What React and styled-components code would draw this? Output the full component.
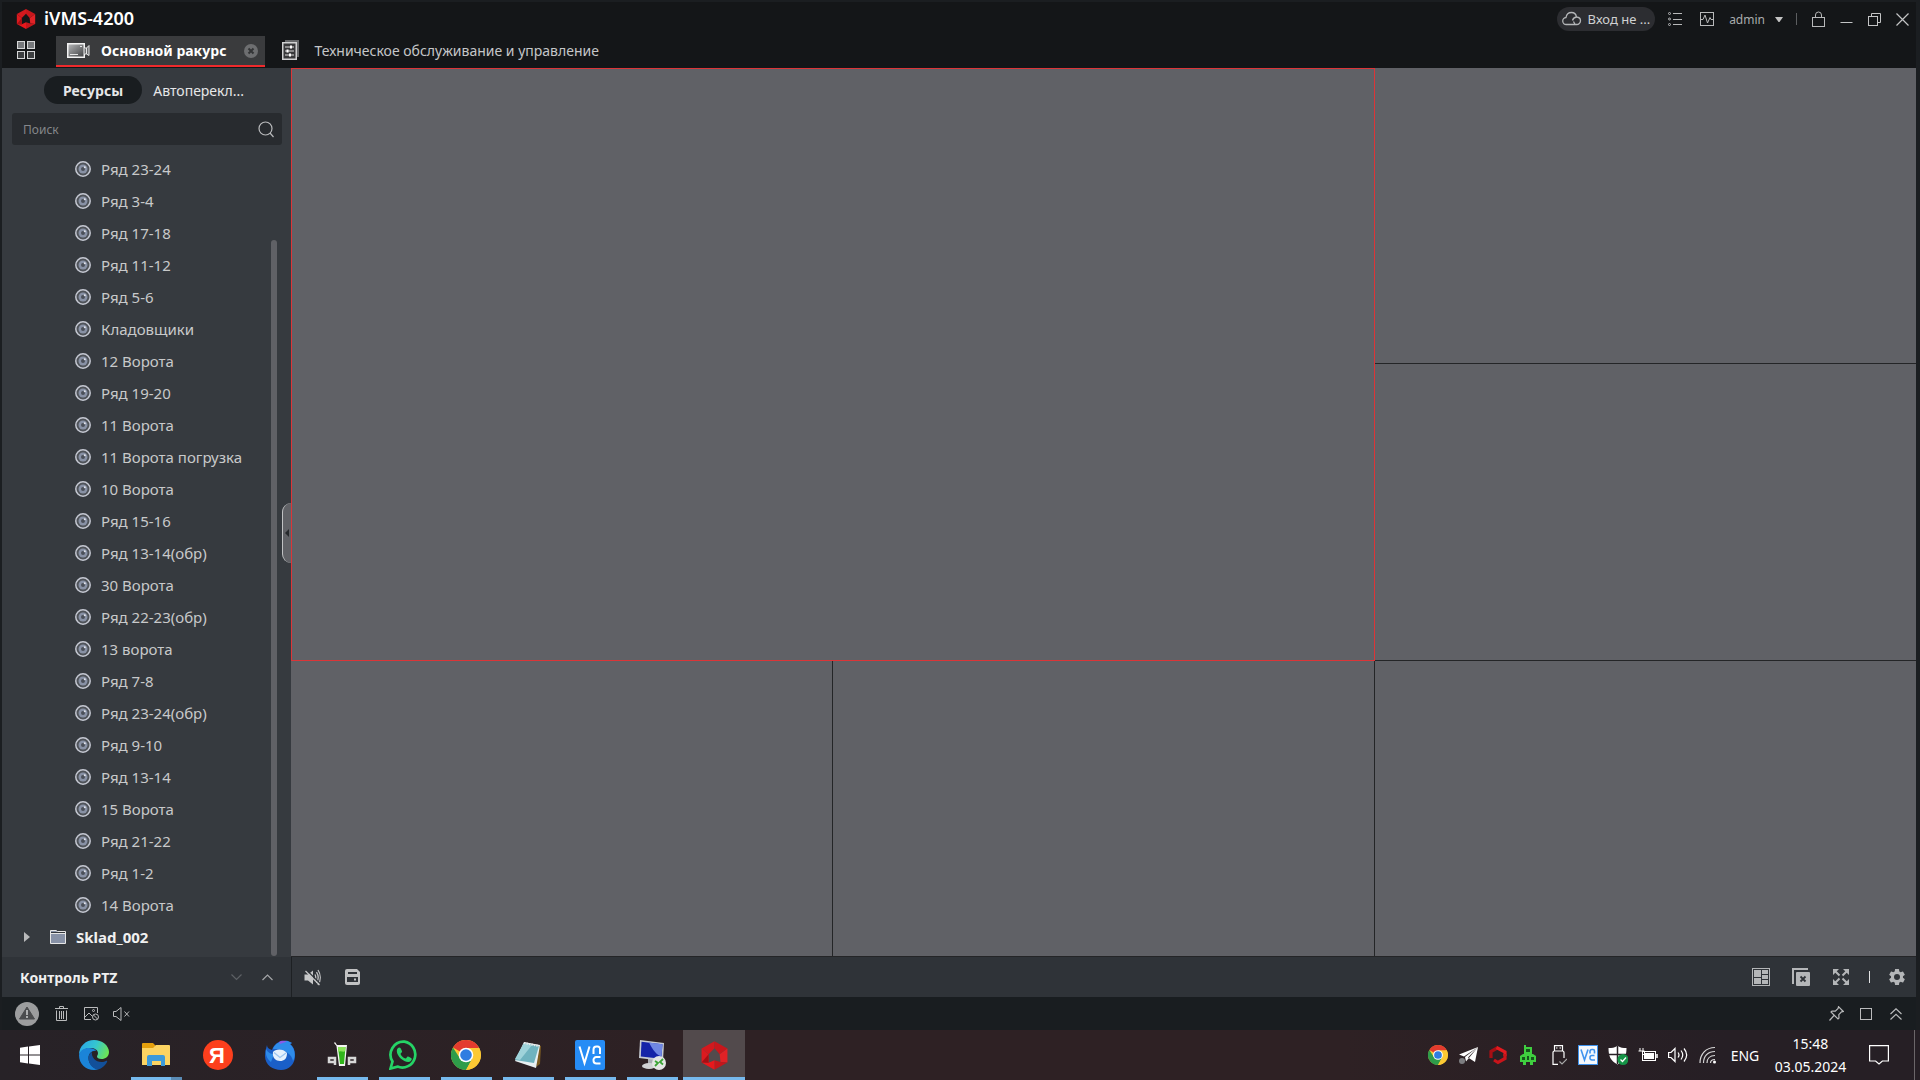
import styled, { createGlobalStyle } from 'styled-components';

const cameras = [
  'Ряд 23-24',
  'Ряд 3-4',
  'Ряд 17-18',
  'Ряд 11-12',
  'Ряд 5-6',
  'Кладовщики',
  '12 Ворота',
  'Ряд 19-20',
  '11 Ворота',
  '11 Ворота погрузка',
  '10 Ворота',
  'Ряд 15-16',
  'Ряд 13-14(обр)',
  '30 Ворота',
  'Ряд 22-23(обр)',
  '13 ворота',
  'Ряд 7-8',
  'Ряд 23-24(обр)',
  'Ряд 9-10',
  'Ряд 13-14',
  '15 Ворота',
  'Ряд 21-22',
  'Ряд 1-2',
  '14 Ворота',
];

/* ---------- app icons ---------- */

const HexLogo = ({ size = 22 }) => (
  <svg width={size} height={size} viewBox="0 0 24 24" aria-hidden="true">
    <path d="M12 1v5.300L7.400 11 2 6.500z" fill="#d3191e" />
    <path d="M12 1l10 5.500-6 4.500-4-4.700z" fill="#c8171c" />
    <path d="M22 6.500v11l-5.400-.5-.6-6z" fill="#e02226" />
    <path d="M22 17.500L12 23v-7.400l4.600 1.400z" fill="#c4161b" />
    <path d="M12 23L2 17.500l5.400.2 4.600-2.100z" fill="#e8181d" />
    <path d="M2 17.500v-11L7.400 11v6.700z" fill="#dc1a1f" />
    <path d="M2 17.500l5.400-6.500v6.700z" fill="#a50f14" />
  </svg>
);

const GridIcon = () => (
  <svg width="18" height="18" viewBox="0 0 18 18" aria-hidden="true">
    <g fill="#77797c" stroke="#d6d7d8">
      <rect x=".5" y=".5" width="7" height="7" />
      <rect x="10.500" y=".5" width="7" height="7" />
      <rect x=".5" y="10.500" width="7" height="7" fill="#3d3f41" />
      <rect x="10.500" y="10.500" width="7" height="7" fill="#3d3f41" />
    </g>
  </svg>
);

const CameraIcon = () => (
  <svg width="23" height="15" viewBox="0 0 23 15" aria-hidden="true">
    <defs>
      <linearGradient id="cam" x1="0" y1="0" x2="1" y2="1">
        <stop offset="0" stopColor="#b9babc" />
        <stop offset="1" stopColor="#3c3d3f" />
      </linearGradient>
    </defs>
    <rect x=".75" y=".75" width="16.500" height="13.500" fill="url(#cam)" stroke="#f2f2f2" strokeWidth="1.500" />
    <path d="M13 3.500h2M3 11.500h8" stroke="#e8e8e8" />
    <path d="M17.500 5h2v6h-2M19.500 5l2.500-2.500v10L19.500 11" fill="#6b6c6e" stroke="#e8e8e8" />
  </svg>
);

const SlidersIcon = () => (
  <svg width="17" height="20" viewBox="0 0 17 20" aria-hidden="true">
    <path d="M3 0h14v17h-2V2H3z" fill="#66686a" />
    <rect x=".75" y="2.750" width="13.500" height="16.500" fill="#38393b" stroke="#d0d1d2" strokeWidth="1.500" />
    <path d="M3 7h9M3 11h9M3 15h9" stroke="#dcdcdc" />
    <path d="M9 5.500v3M5.500 9.500v3M8 13.500v3" stroke="#fff" strokeWidth="2" />
  </svg>
);

const TabCloseIcon = () => (
  <svg width="14" height="14" viewBox="0 0 14 14" aria-hidden="true">
    <circle cx="7" cy="7" r="7" fill="#6d6e70" />
    <path d="M4.500 4.500l5 5M9.500 4.500l-5 5" stroke="#333436" strokeWidth="2" />
  </svg>
);

const CloudIcon = () => (
  <svg width="20" height="16" viewBox="0 0 20 16" fill="none" stroke="#b4b6b8" strokeWidth="1.300" aria-hidden="true">
    <path d="M4.500 13.500a3.500 3.500 0 01-.5-7C4.500 3 7 1.500 9.500 1.500s4.500 1.500 5 4.500c2.500.2 4 1.800 4 3.700a3.800 3.800 0 01-4 3.800z" />
    <path d="M14.500 6c-2 .2-3.500 1.200-4 3.500" />
    <path d="M13 13.500c-1-2-1.500-3-1.500-3" />
  </svg>
);

const ListIcon = () => (
  <svg width="14" height="14" viewBox="0 0 14 14" fill="none" stroke="#b8b9ba" aria-hidden="true">
    <path d="M5 1.500h9M5 7.500h9M5 12.500h9" />
    <circle cx="1.500" cy="1.500" r="1" />
    <circle cx="1.500" cy="7" r="1" />
    <circle cx="1.500" cy="12.500" r="1" />
  </svg>
);

const WaveIcon = () => (
  <svg width="14" height="14" viewBox="0 0 14 14" fill="none" stroke="#b8b9ba" aria-hidden="true">
    <rect x=".5" y=".5" width="13" height="13" />
    <path d="M1 7.500h2L5 3l2.500 8L10 5.500l1 2h2" />
  </svg>
);

const CaretIcon = () => (
  <svg width="8" height="5" viewBox="0 0 8 5" aria-hidden="true">
    <path d="M0 0h8L4.500 5h-1z" fill="#c3c3c3" />
  </svg>
);

const LockIcon = () => (
  <svg width="13" height="16" viewBox="0 0 13 16" fill="none" stroke="#b8b9ba" aria-hidden="true">
    <rect x=".5" y="6.500" width="12" height="9" />
    <path d="M3.500 6.500V4a3 3 0 016 0v2.500" />
  </svg>
);

const MinimizeIcon = () => (
  <svg width="13" height="13" viewBox="0 0 13 13" stroke="#c3c4c5" aria-hidden="true">
    <path d="M.5 9.500h12" />
  </svg>
);

const RestoreIcon = () => (
  <svg width="13" height="13" viewBox="0 0 13 13" fill="none" stroke="#c3c4c5" aria-hidden="true">
    <path d="M3.500 3.500v-3h9v9h-3" />
    <rect x=".5" y="3.500" width="9" height="9" />
  </svg>
);

const CloseIcon = () => (
  <svg width="13" height="13" viewBox="0 0 13 13" stroke="#c3c4c5" strokeWidth="1.200" aria-hidden="true">
    <path d="M.5.5l12 12M12.500.5l-12 12" />
  </svg>
);

const SearchIcon = () => (
  <svg width="16" height="17" viewBox="0 0 16 17" fill="none" stroke="#b9babc" strokeWidth="1.200" aria-hidden="true">
    <circle cx="7.500" cy="7.500" r="6.500" />
    <path d="M12 12l3.500 4" />
  </svg>
);

const LensIcon = () => (
  <svg width="16" height="16" viewBox="0 0 16 16" aria-hidden="true">
    <circle cx="8" cy="8" r="7.200" fill="#4f5359" stroke="#c5c8d2" strokeWidth="1.500" />
    <circle cx="8" cy="8" r="4.500" fill="#8891a5" />
    <circle cx="8" cy="8" r="2" fill="#4b5059" />
    <circle cx="9.800" cy="6.200" r="1" fill="#e4e6ec" />
  </svg>
);

const ExpandIcon = () => (
  <svg width="6" height="10" viewBox="0 0 6 10" aria-hidden="true">
    <path d="M0 0l6 5-6 5z" fill="#b9babb" />
  </svg>
);

const FolderIcon = () => (
  <svg width="16" height="14" viewBox="0 0 16 14" aria-hidden="true">
    <path d="M.5.500H6l1.500 1h8v12H.5z" fill="#8791a6" stroke="#e6e6e6" />
    <path d="M1 2.500h14" stroke="#33373c" />
    <path d="M1 3.500h14" stroke="#e6e6e6" />
  </svg>
);

const ChevronIcon = ({ down, color }) => (
  <svg width="11" height="7" viewBox="0 0 11 7" fill="none" stroke={color} strokeWidth="1.200" aria-hidden="true">
    <path d={down ? 'M.5.500l5 5 5-5' : 'M.5 6l5-5 5 5'} />
  </svg>
);

const SpeakerOffIcon = () => (
  <svg width="17" height="17" viewBox="0 0 17 17" fill="none" stroke="#c6c7c8" strokeWidth="1.300" aria-hidden="true">
    <path d="M.5 5.500h3.500L9 1.500v14L4 11.500H.5z" fill="#c6c7c8" stroke="none" />
    <path d="M11 5.500c1 2 1 4 0 6M12.500 3.200c2.200 3.400 2.200 7.200 0 10.600M14 1c3 4.500 3 10.500 0 15" />
    <path d="M3 1.500l13 13" stroke="#2f3338" strokeWidth="1.300" />
    <path d="M1.500 2l14 14" />
  </svg>
);

const SaveIcon = () => (
  <svg width="15" height="16" viewBox="0 0 15 16" aria-hidden="true">
    <path d="M0 2a2 2 0 012-2h10l3 3v11a2 2 0 01-2 2H2a2 2 0 01-2-2z" fill="#c1c2c3" />
    <path d="M3 3h9v2H3zM2 8h11v5H2z" fill="#2f3338" />
    <path d="M9 9.500h2v2H9z" fill="#c1c2c3" />
  </svg>
);

const LayoutIcon = () => (
  <svg width="18" height="18" viewBox="0 0 18 18" aria-hidden="true">
    <rect x=".5" y=".5" width="17" height="17" fill="none" stroke="#b4b6b8" />
    <path d="M2 2h7v7H2zM2 10h7v6H2zM10 2h6v4h-6zM10 7h6v4h-6zM10 12h6v4h-6z" fill="#b4b6b8" />
  </svg>
);

const CloseAllIcon = () => (
  <svg width="18" height="18" viewBox="0 0 18 18" aria-hidden="true">
    <path d="M1 16V1h15" fill="none" stroke="#b4b6b8" strokeWidth="2" />
    <rect x="4" y="4" width="14" height="14" rx="1" fill="#b4b6b8" />
    <path d="M8.500 8.500l5 5M13.500 8.500l-5 5" stroke="#2f3338" strokeWidth="1.800" />
  </svg>
);

const FullscreenIcon = () => (
  <svg width="16" height="16" viewBox="0 0 16 16" aria-hidden="true">
    <path d="M0 0h6L0 6zM16 0v6l-6-6zM0 16v-6l6 6zM16 16h-6l6-6z" fill="#b4b6b8" />
    <path d="M2 2l4.500 4.500M14 2L9.500 6.500M2 14l4.500-4.500M14 14L9.500 9.500" stroke="#b4b6b8" strokeWidth="2" />
  </svg>
);

const GearIcon = () => (
  <svg width="20" height="20" viewBox="0 0 24 24" aria-hidden="true">
    <path
      fill="#b4b6b8"
      d="M19.140 12.940c.04-.3.06-.61.06-.94 0-.32-.02-.64-.07-.94l2.030-1.580a.49.49 0 00.12-.61l-1.920-3.320a.488.488 0 00-.59-.22l-2.390.96c-.5-.38-1.030-.7-1.620-.94l-.36-2.540a.484.484 0 00-.48-.41h-3.840c-.24 0-.43.17-.47.41l-.36 2.540c-.59.24-1.130.57-1.620.94l-2.390-.96c-.22-.08-.47 0-.59.22L2.740 8.870c-.12.21-.08.47.12.61l2.030 1.580c-.05.3-.09.63-.09.94s.02.64.07.94l-2.030 1.580a.49.49 0 00-.12.61l1.920 3.320c.12.22.37.29.59.22l2.390-.96c.5.38 1.030.7 1.620.94l.36 2.540c.05.24.24.41.48.41h3.840c.24 0 .44-.17.47-.41l.36-2.540c.59-.24 1.130-.56 1.620-.94l2.390.96c.22.08.47 0 .59-.22l1.920-3.320c.12-.22.07-.47-.12-.61z"
    />
    <circle cx="12" cy="12" r="3.600" fill="#2f3338" />
  </svg>
);

const WarningIcon = () => (
  <svg width="24" height="24" viewBox="0 0 24 24" aria-hidden="true">
    <circle cx="12" cy="12" r="12" fill="#9c9d9e" />
    <path d="M12 5l7.500 12h-15z" fill="#4b4c4e" stroke="#4b4c4e" strokeLinejoin="round" />
    <path d="M12 8v5M12 14v2" stroke="#b9babb" strokeWidth="1.800" />
  </svg>
);

const TrashIcon = () => (
  <svg width="13" height="15" viewBox="0 0 13 15" fill="none" stroke="#babbbc" aria-hidden="true">
    <path d="M0 2.500h13M4.500 2.500v-2h4v2M1.500 4.500v10h10v-10M4.500 5v8M6.500 5v8M8.500 5v8" />
  </svg>
);

const PictureOffIcon = () => (
  <svg width="15" height="14" viewBox="0 0 15 14" fill="none" stroke="#babbbc" aria-hidden="true">
    <path d="M7 12.500H.5V.5h13V6M1 10l4-4 3 3" />
    <circle cx="9.500" cy="3.500" r="1" />
    <circle cx="11.500" cy="10" r="3" />
    <path d="M9.500 8l4 4" />
  </svg>
);

const MuteIcon = () => (
  <svg width="17" height="14" viewBox="0 0 17 14" fill="none" stroke="#babbbc" aria-hidden="true">
    <path d="M.5 4.500H3l5-4v13l-5-4H.5zM11.500 4.500l4.500 5M16 4.500l-4.500 5" />
  </svg>
);

const PinIcon = () => (
  <svg width="15" height="15" viewBox="0 0 15 15" fill="none" stroke="#babbbc" strokeWidth="1.200" aria-hidden="true">
    <path d="M9.500.7l4.800 4.800-1.800.4-2.700 2.800.2 3.300-1 1L2 6l1-1 3.300.2L9.100 2.500zM5 9.500L.5 14.500" />
  </svg>
);

const SquareIcon = () => (
  <svg width="12" height="12" viewBox="0 0 12 12" fill="none" stroke="#babbbc" aria-hidden="true">
    <rect x=".5" y=".5" width="11" height="11" />
  </svg>
);

const DoubleUpIcon = () => (
  <svg width="12" height="12" viewBox="0 0 12 12" fill="none" stroke="#babbbc" strokeWidth="1.200" aria-hidden="true">
    <path d="M.5 6L6 .8 11.500 6M.5 11.500L6 6.300l5.500 5.200" />
  </svg>
);

/* ---------- taskbar icons ---------- */

const WindowsIcon = () => (
  <svg width="20" height="20" viewBox="0 0 20 20" fill="#fff" aria-hidden="true">
    <path d="M0 2.800l8-1.200v8H0zM9 1.500L20 0v9.600H9zM0 10.500h8v8l-8-1.200zM9 10.500h11V20L9 18.500z" />
  </svg>
);

const EdgeIcon = () => (
  <svg width="30" height="30" viewBox="0 0 30 30" aria-hidden="true">
    <defs>
      <linearGradient id="edgeTop" x1="0" y1="0.300" x2="1" y2="0.600">
        <stop offset="0" stopColor="#2aa6e8" />
        <stop offset=".5" stopColor="#35c6d0" />
        <stop offset="1" stopColor="#6ee552" />
      </linearGradient>
    </defs>
    <path d="M0 15C0 6 7 0 15 0s15 5.500 15 12c0 4.500-3.500 7-7.500 7-3 0-4.500-1-4.500-2.500 0-1 1-1.500 1-3.500 0-3-3.500-5-7.500-5C6 8 1.500 11 0 15z" fill="url(#edgeTop)" />
    <path d="M0 15c1-4.500 5-7 10-7 3 0 6 1 7.500 3-4-1-8 2-8 7 0 6 5 10.500 10 11-1.500.7-3 1-4.500 1C7 30 0 24 0 15z" fill="#1b84d8" />
    <path d="M9.500 18c0-3 1.500-5 3.500-6-1 5 3.500 10 9.500 10 2 0 3.500-.5 4.500-1 1-.4 1.500.2 1 1C26 26 22 29 18.500 29.500 13 28.500 9.500 23.500 9.500 18z" fill="#12509a" />
  </svg>
);

const ExplorerIcon = () => (
  <svg width="28" height="24" viewBox="0 0 28 24" aria-hidden="true">
    <path d="M0 1a1 1 0 011-1h10l3 3H28v19H0z" fill="#e5a00d" />
    <path d="M0 5h11l3-3h13a1 1 0 011 1v19H0z" fill="#fcd462" />
    <path d="M5 23v-9a2 2 0 012-2h14a2 2 0 012 2v9h-4v-5h-9v5z" fill="#3d9ad9" />
  </svg>
);

const YandexIcon = () => (
  <svg width="30" height="30" viewBox="0 0 30 30" aria-hidden="true">
    <circle cx="15" cy="15" r="15" fill="#fc3f1d" />
    <text x="14" y="23" textAnchor="middle" fontFamily="Liberation Sans, sans-serif" fontSize="22" fontWeight="bold" fill="#fff">
      Я
    </text>
  </svg>
);

const ThunderbirdIcon = () => (
  <svg width="30" height="30" viewBox="0 0 30 30" aria-hidden="true">
    <path d="M2 5c0 3 2 4 5 5 2-6 8-10 14-9l6 2-2 1c4 3 5 7 5 12 0 8-6 14-14 14S0 25 0 16C0 12 1 9 2 5z" fill="#1a5fc8" />
    <path d="M8 9c2-6 9-9 15-8l4 2-2 1c5 4 6 12 3 17-1-7-9-13-20-12z" fill="#2f8cea" />
    <path d="M14 2c2-1.500 5-1.500 8-.5L15 4z" fill="#8a5be8" />
    <path d="M1 9c2 4 5 5 8 5l-3 8C2 19 0 14 1 9z" fill="#2e8be8" />
    <path d="M8 12c2-3 10-4 14 1 0 6-3 8-7 8s-8-3-7-9z" fill="#e6f1fd" />
    <path d="M9 12.500l6 5 6-4.500" fill="none" stroke="#9ec6f0" strokeWidth="1.300" />
  </svg>
);

const GlassIcon = () => (
  <svg width="30" height="28" viewBox="0 0 30 28" aria-hidden="true">
    <path d="M8 1l2 3h10l-2 21h-6L9.500 5 7 2z" fill="#f4f5f2" />
    <path d="M11 6h7.500L17 23h-4z" fill="#31b51b" />
    <path d="M11 6h7.500l-.3 4c-2 2-4-1-6.800 1z" fill="#8be35a" />
    <path d="M8 24v-7H2v4h6M22 24v-7h6v4h-6" fill="none" stroke="#d7d7d7" strokeWidth="2.500" />
  </svg>
);

const WhatsAppIcon = () => (
  <svg width="30" height="30" viewBox="0 0 30 30" aria-hidden="true">
    <path d="M1.500 28.500l2-7A13 13 0 0115.500 1.700a13 13 0 11-7 24.900z" fill="none" stroke="#25d366" strokeWidth="2.700" />
    <path d="M10.500 7.500c-1.500 0-2.700 1.500-2.700 3.500 0 5 6.500 11 11.500 11 2 0 3.500-1.500 3.500-3.200 0-.6-3.400-2.300-4-2.300-.8 0-1.300 2-2.200 2-1.500 0-5-3.200-5-4.500 0-.8 1.500-1.500 1.500-2.200 0-.6-1.300-4.300-2.600-4.300z" fill="#25d366" />
  </svg>
);

const ChromeIcon = ({ size = 30 }) => (
  <svg width={size} height={size} viewBox="0 0 30 30" aria-hidden="true">
    <circle cx="15" cy="15" r="15" fill="#fcc934" />
    <path d="M15 15L2 7.500a15 15 0 0126 0z" fill="#e33b2e" />
    <path d="M2 7.500A15 15 0 0015 30l6.500-11.500L9 18.500z" fill="#2e9c4a" />
    <path d="M15 8h13.200A15 15 0 0115 30l6.300-11.400z" fill="#fcc934" />
    <circle cx="15" cy="15" r="7.300" fill="#fff" />
    <circle cx="15" cy="15" r="5.800" fill="#2f7de1" />
  </svg>
);

const NotepadIcon = () => (
  <svg width="28" height="28" viewBox="0 0 28 28" aria-hidden="true">
    <path d="M24 4l3 1-1 18-4 3z" fill="#7a5a22" />
    <path d="M10 1l16 3-4 23L1 20z" fill="#e9f0f2" />
    <path d="M10 2l15 3-5 17L1 19z" fill="#6fb3bf" />
    <path d="M10 2l8 2-12 15-5-1z" fill="#9fd3da" />
    <path d="M10 2l15 3" stroke="#e8e8e8" strokeWidth="2" strokeDasharray="1.500 1" />
  </svg>
);

const VncIcon = () => (
  <svg width="30" height="30" viewBox="0 0 30 30" fill="none" stroke="#fff" strokeWidth="2" aria-hidden="true">
    <rect width="30" height="30" rx="2" fill="#268cf5" stroke="none" />
    <path d="M4.500 6.500L9.500 23l5-16.500" />
    <path d="M18.500 14V9.500a3 3 0 013-3h1a2.500 2.500 0 012.500 3V14M25.500 17h-4a3 3 0 00-3 3.500 3 3 0 003 3h4" />
  </svg>
);

const RemoteIcon = () => (
  <svg width="30" height="30" viewBox="0 0 30 30" aria-hidden="true">
    <path d="M11 18h5l1 7h-6z" fill="#a9adb2" />
    <ellipse cx="12" cy="26" rx="7" ry="3" fill="#d0d2d4" />
    <path d="M3 0l24 3-1 18L2 18z" fill="#c6cbd2" />
    <path d="M4.500 1.700l21 2.600-1.200 14.500L3.800 16.500z" fill="#1524a8" />
    <path d="M12 2.600l13.500 1.700-1 12c-5-1-8.500-6-12.500-13.700z" fill="#6f87e3" />
    <circle cx="22" cy="23" r="7" fill="#e4e6e4" />
    <path d="M18 21l3 2-3 3M26 19l-3 3 3 2.500" fill="none" stroke="#3ba435" strokeWidth="1.800" />
  </svg>
);

/* ---------- tray icons ---------- */

const TelegramIcon = () => (
  <svg width="20" height="20" viewBox="0 0 20 20" aria-hidden="true">
    <path d="M20 2L1 9.500l5 2zM20 2L7 12l1 4.500zM20 2l-3 15-7-4.500z" fill="#fff" />
    <circle cx="4" cy="16" r="3" fill="#7d7d80" />
  </svg>
);

const HexOutlineIcon = () => (
  <svg width="20" height="20" viewBox="0 0 20 20" fill="none" strokeWidth="3.200" aria-hidden="true">
    <path d="M3 13V6.500L10 2.500" stroke="#a80f14" />
    <path d="M8.500 2.500L17 7v4" stroke="#e31a1f" />
    <path d="M17 9v4.500L10 17.500 6 15" stroke="#c8141a" />
  </svg>
);

const RobotIcon = () => (
  <svg width="16" height="20" viewBox="0 0 16 20" aria-hidden="true">
    <path d="M4 2V0h2v2h6v7h1l3 2v6h-3v3h-3v-3H6v3H3v-3H0v-6l3-2h1z" fill="#3fce3f" />
    <path d="M6 4h4v3H6zM2 12h3v3H2zM11 12h3v3h-3zM7 11h2v4H7z" fill="#14561b" />
  </svg>
);

const UsbIcon = () => (
  <svg width="18" height="20" viewBox="0 0 18 20" fill="none" stroke="#fff" strokeWidth="1.200" aria-hidden="true">
    <path d="M5.500 6V.7h8V6M9 19.300H4V7.500a1.500 1.500 0 011.500-1.500h8A1.500 1.500 0 0115 7.500V13M7 3h1.500M10.500 3H12" />
    <path d="M10.500 16.500l2.500 2.500 5-5" stroke="#a8a8a8" />
  </svg>
);

const VncTrayIcon = () => (
  <svg width="20" height="20" viewBox="0 0 20 20" fill="none" stroke="#3f93ee" strokeWidth="1.600" aria-hidden="true">
    <rect width="20" height="20" fill="#f4f8fd" stroke="none" />
    <rect x=".5" y=".5" width="19" height="19" strokeWidth="1" />
    <path d="M3 4.500L6.500 15 10 4.500M12 8.500V6a2 2 0 012-1.500h1a1.500 1.500 0 011.500 1.500v2.500M16.500 10.500H14a2 2 0 00-2 2 2 2 0 002 2.500h3" />
  </svg>
);

const ShieldIcon = () => (
  <svg width="20" height="20" viewBox="0 0 20 20" aria-hidden="true">
    <path d="M9.500.7c3 2 5.500 2.300 9 2.300 0 8-2 13-9 16.500C2.500 16 .5 11 .5 3c3.500 0 6-.3 9-2.300z" fill="#fff" />
    <path d="M9.500 1v18M1 9.500h17.500" stroke="#272125" strokeWidth="1.500" />
    <circle cx="15" cy="14.500" r="5.500" fill="#159447" />
    <path d="M12.500 14.500l2 2 3.500-4" fill="none" stroke="#fff" strokeWidth="1.300" />
  </svg>
);

const BatteryIcon = () => (
  <svg width="20" height="14" viewBox="0 0 20 14" fill="none" stroke="#fff" aria-hidden="true">
    <path d="M2 0v3M5 0v3M.5 3h6v2.500L4.500 7.500V12" />
    <rect x="4.500" y="3.500" width="13" height="9" />
    <path d="M6 5h10v6H6z" fill="#fff" stroke="none" />
    <path d="M19 6v4" strokeWidth="1.500" />
  </svg>
);

const VolumeIcon = () => (
  <svg width="20" height="16" viewBox="0 0 20 16" fill="none" stroke="#fff" strokeWidth="1.200" aria-hidden="true">
    <path d="M.6 5.500H3l4-4v13l-4-4H.6zM10 5.500c1.200 1.500 1.200 3.500 0 5M13 3.500c2.300 3 2.300 6 0 9M16 1.500c3.300 4 3.300 9 0 13" />
  </svg>
);

const WifiIcon = () => (
  <svg width="18" height="18" viewBox="0 0 18 18" fill="none" stroke="#d8d8d8" strokeWidth="1.200" aria-hidden="true">
    <path d="M1 17C1 8 7 1.500 16 1.500M4.500 17C4.500 10 9 5.500 16 5.500M8 17c0-4.500 3-7.500 8-7.500M11.500 17c0-2 1.500-3.500 4.500-3.500" />
    <circle cx="15.500" cy="16" r="1.500" fill="#fff" stroke="none" />
  </svg>
);

const BubbleIcon = () => (
  <svg width="20" height="20" viewBox="0 0 20 20" fill="none" stroke="#fff" strokeWidth="1.200" aria-hidden="true">
    <path d="M.6.600h18.800v15.400h-6L10 19l-3.400-3h-6z" />
  </svg>
);

const tasks = [
  { name: 'Microsoft Edge', Icon: EdgeIcon },
  { name: 'Проводник', Icon: ExplorerIcon, state: 'stacked' },
  { name: 'Яндекс', Icon: YandexIcon },
  { name: 'Thunderbird', Icon: ThunderbirdIcon },
  { name: 'QIP', Icon: GlassIcon, state: 'open' },
  { name: 'WhatsApp', Icon: WhatsAppIcon, state: 'open' },
  { name: 'Google Chrome', Icon: ChromeIcon, state: 'open' },
  { name: 'Блокнот', Icon: NotepadIcon, state: 'open' },
  { name: 'VNC', Icon: VncIcon, state: 'open' },
  { name: 'Удалённый рабочий стол', Icon: RemoteIcon, state: 'open' },
  { name: 'iVMS-4200', Icon: () => <HexLogo size={31} />, state: 'active' },
];

const trayItems = [
  { name: 'Google Chrome', Icon: () => <ChromeIcon size={20} /> },
  { name: 'Telegram', Icon: TelegramIcon },
  { name: 'iVMS-4200', Icon: HexOutlineIcon },
  { name: 'QIP', Icon: RobotIcon },
  { name: 'USB', Icon: UsbIcon },
  { name: 'VNC', Icon: VncTrayIcon },
  { name: 'Безопасность', Icon: ShieldIcon },
  { name: 'Батарея', Icon: BatteryIcon },
  { name: 'Громкость', Icon: VolumeIcon },
  { name: 'Wi-Fi', Icon: WifiIcon },
];

/* ---------- sections ---------- */

const TitleBar = () => (
  <TitleRow>
    <Brand>
      <HexLogo />
      <h1>iVMS-4200</h1>
    </Brand>
    <TitleActions>
      <CloudButton>
        <CloudIcon />
        Вход не ...
      </CloudButton>
      <IconButton $width={32} aria-label="Список">
        <ListIcon />
      </IconButton>
      <IconButton $width={32} aria-label="Состояние">
        <WaveIcon />
      </IconButton>
      <UserButton>
        admin
        <CaretIcon />
      </UserButton>
      <Divider $gap={7} $color="#5c5e60" />
      <IconButton $width={28} aria-label="Заблокировать">
        <LockIcon />
      </IconButton>
      <IconButton $width={28} aria-label="Свернуть">
        <MinimizeIcon />
      </IconButton>
      <IconButton $width={28} aria-label="Восстановить">
        <RestoreIcon />
      </IconButton>
      <IconButton $width={28} aria-label="Закрыть">
        <CloseIcon />
      </IconButton>
    </TitleActions>
  </TitleRow>
);

const TabBar = () => (
  <TabRow>
    <IconButton $width={48} aria-label="Меню">
      <GridIcon />
    </IconButton>
    <ActiveTab>
      <TabButton $active>
        <CameraIcon />
        Основной ракурс
      </TabButton>
      <IconButton $width={28} aria-label="Закрыть вкладку">
        <TabCloseIcon />
      </IconButton>
    </ActiveTab>
    <TabButton>
      <SlidersIcon />
      Техническое обслуживание и управление
    </TabButton>
  </TabRow>
);

const Sidebar = () => (
  <SidePanel>
    <Switcher>
      <SwitchButton $active>Ресурсы</SwitchButton>
      <SwitchButton>Автоперекл...</SwitchButton>
    </Switcher>
    <SearchBox>
      <input type="text" placeholder="Поиск" aria-label="Поиск" />
      <SearchIcon />
    </SearchBox>
    <TreeArea>
      <Tree>
        {cameras.map((name) => (
          <Camera key={name}>
            <LensIcon />
            {name}
          </Camera>
        ))}
        <Group>
          <ExpandIcon />
          <FolderIcon />
          Sklad_002
        </Group>
      </Tree>
      <ScrollThumb />
    </TreeArea>
    <PtzBar>
      <h2>Контроль PTZ</h2>
      <IconButton $width={31} aria-label="Вниз">
        <ChevronIcon down color="#5d6165" />
      </IconButton>
      <IconButton $width={31} aria-label="Вверх">
        <ChevronIcon color="#a4a6a8" />
      </IconButton>
    </PtzBar>
    <CollapseHandle aria-label="Скрыть панель">
      <svg width="4" height="8" viewBox="0 0 4 8" aria-hidden="true">
        <path d="M4 0v8L0 4z" fill="#26292c" />
      </svg>
    </CollapseHandle>
  </SidePanel>
);

const Viewer = () => (
  <ViewPanel>
    <VideoGrid>
      <MainCell />
      <Cell />
      <Cell />
      <Cell />
      <Cell />
      <Cell />
    </VideoGrid>
    <Toolbar>
      <IconButton $width={40} aria-label="Звук">
        <SpeakerOffIcon />
      </IconButton>
      <IconButton $width={40} aria-label="Сохранить ракурс">
        <SaveIcon />
      </IconButton>
      <Spacer />
      <IconButton $width={40} aria-label="Разделение экрана">
        <LayoutIcon />
      </IconButton>
      <IconButton $width={40} aria-label="Остановить все">
        <CloseAllIcon />
      </IconButton>
      <IconButton $width={40} aria-label="Полный экран">
        <FullscreenIcon />
      </IconButton>
      <Divider $gap={8} $color="#e2e3e4" />
      <IconButton $width={38} aria-label="Настройки">
        <GearIcon />
      </IconButton>
    </Toolbar>
  </ViewPanel>
);

const StatusBar = () => (
  <StatusRow>
    <IconButton $width={39} aria-label="Тревоги">
      <WarningIcon />
    </IconButton>
    <IconButton $width={30} aria-label="Очистить">
      <TrashIcon />
    </IconButton>
    <IconButton $width={30} aria-label="Изображения">
      <PictureOffIcon />
    </IconButton>
    <IconButton $width={30} aria-label="Без звука">
      <MuteIcon />
    </IconButton>
    <Spacer />
    <IconButton $width={30} aria-label="Закрепить">
      <PinIcon />
    </IconButton>
    <IconButton $width={30} aria-label="Развернуть">
      <SquareIcon />
    </IconButton>
    <IconButton $width={30} aria-label="Показать">
      <DoubleUpIcon />
    </IconButton>
  </StatusRow>
);

const Taskbar = () => (
  <TaskRow>
    <IconButton $width={60} aria-label="Пуск">
      <WindowsIcon />
    </IconButton>
    <TaskList>
      {tasks.map(({ name, Icon, state }) => (
        <TaskButton key={name} $state={state} aria-label={name}>
          <Icon />
        </TaskButton>
      ))}
    </TaskList>
    <Spacer />
    {trayItems.map(({ name, Icon }) => (
      <IconButton key={name} $width={30} aria-label={name}>
        <Icon />
      </IconButton>
    ))}
    <Language>ENG</Language>
    <Clock>
      <time>15:48</time>
      <time>03.05.2024</time>
    </Clock>
    <IconButton $width={50} aria-label="Уведомления">
      <BubbleIcon />
    </IconButton>
    <ShowDesktop aria-label="Показать рабочий стол" />
  </TaskRow>
);

const App = () => (
  <Desktop>
    <GlobalStyle />
    <AppWindow>
      <TitleBar />
      <TabBar />
      <Main>
        <Sidebar />
        <Viewer />
      </Main>
      <StatusBar />
    </AppWindow>
    <Taskbar />
  </Desktop>
);

const GlobalStyle = createGlobalStyle`
  * {
    box-sizing: border-box;
  }
  body {
    margin: 0;
    background: #1a1d20;
    font-family: 'Noto Sans', 'Open Sans', sans-serif;
  }
  button {
    padding: 0;
    border: 0;
    background: none;
    font: inherit;
    color: inherit;
    white-space: nowrap;
  }
  h1, h2, ul {
    margin: 0;
    padding: 0;
  }
  svg {
    display: block;
    flex-shrink: 0;
  }
`;

const Desktop = styled.div`
  min-height: 100vh;
  display: flex;
  flex-direction: column;
`;

const AppWindow = styled.div`
  flex: 1;
  display: flex;
  flex-direction: column;
  padding: 2px 4px 0 2px;
  background: #1b1e21;
`;

const IconButton = styled.button`
  width: ${(props) => props.$width}px;
  height: 100%;
  flex-shrink: 0;
  display: flex;
  align-items: center;
  justify-content: center;
`;

const Divider = styled.span`
  width: 1px;
  height: 12px;
  margin: 0 ${(props) => props.$gap}px;
  background: ${(props) => props.$color};
`;

const Spacer = styled.div`
  flex: 1;
`;

const TitleRow = styled.header`
  height: 34px;
  display: flex;
  justify-content: space-between;
  padding-left: 13px;
  background: #141618;
`;

const Brand = styled.div`
  display: flex;
  align-items: center;
  gap: 7px;

  h1 {
    font-size: 18px;
    line-height: 32px;
    padding-bottom: 2px;
    font-weight: 600;
    color: #fff;
  }
`;

const TitleActions = styled.div`
  display: flex;
  align-items: center;
`;

const CloudButton = styled.button`
  height: 24px;
  display: flex;
  align-items: center;
  gap: 6px;
  padding: 0 5px;
  margin-right: 4px;
  border-radius: 12px;
  background: #2c2d31;
  color: #d0d1d2;
  font-size: 13px;
`;

const UserButton = styled.button`
  display: flex;
  align-items: center;
  gap: 10px;
  padding: 0 6px;
  font-size: 12px;
  color: #a9abad;
`;

const TabRow = styled.nav`
  height: 32px;
  display: flex;
  background: #141618;
  padding-bottom: 1px;

  > button {
    padding-bottom: 3px;
  }
`;

const ActiveTab = styled.div`
  display: flex;
  margin: 0 6px 0 6px;
  background: #3a3b3d;
  border-bottom: 2px solid #f02a2c;
`;

const TabButton = styled.button`
  display: flex;
  align-items: center;
  gap: ${(props) => (props.$active ? 11 : 15)}px;
  padding: 0 11px;
  font-size: 14px;
  font-weight: ${(props) => (props.$active ? 700 : 400)};
  color: ${(props) => (props.$active ? '#fff' : '#c5c6c8')};
`;

const Main = styled.main`
  flex: 1;
  display: flex;
`;

const SidePanel = styled.aside`
  position: relative;
  width: 289px;
  flex-shrink: 0;
  display: flex;
  flex-direction: column;
  background: #363a3f;
`;

const Switcher = styled.div`
  display: flex;
  padding: 8px 0 9px 42px;
`;

const SwitchButton = styled.button`
  height: 28px;
  padding: 0 ${(props) => (props.$active ? 19 : 11)}px;
  border-radius: 14px;
  background: ${(props) => (props.$active ? '#191d20' : 'none')};
  font-size: 14px;
  font-weight: ${(props) => (props.$active ? 700 : 400)};
  color: #e6e7e8;
`;

const SearchBox = styled.label`
  height: 32px;
  display: flex;
  align-items: center;
  margin: 0 9px 8px 10px;
  padding: 0 8px 0 11px;
  border-radius: 3px;
  background: #282b2f;

  input {
    flex: 1;
    min-width: 0;
    padding: 0;
    border: 0;
    outline: 0;
    background: none;
    font: inherit;
    font-size: 12px;
    color: #c5c6c8;
  }
  input::placeholder {
    color: #85878a;
    opacity: 1;
  }
`;

const TreeArea = styled.div`
  flex: 1;
  display: flex;
  justify-content: space-between;
`;

const Tree = styled.ul`
  list-style: none;
  font-size: 15px;
  color: #c8c9ca;
`;

const Camera = styled.li`
  height: 32px;
  display: flex;
  align-items: center;
  gap: 10px;
  padding-left: 73px;
`;

const Group = styled.li`
  height: 32px;
  display: flex;
  align-items: center;
  gap: 10px;
  padding-left: 22px;
  font-weight: 700;
  color: #f0f0f0;

  svg:first-child {
    margin-right: 10px;
  }
`;

const ScrollThumb = styled.div`
  width: 6px;
  margin: 87px 14px 1px 0;
  border-radius: 3px;
  background: #606166;
`;

const PtzBar = styled.div`
  height: 40px;
  display: flex;
  align-items: center;
  padding: 0 8px 0 18px;
  background: #2f3338;

  h2 {
    flex: 1;
    font-size: 14px;
    font-weight: 700;
    color: #f0f0f0;
  }
`;

const CollapseHandle = styled.button`
  position: absolute;
  right: 0;
  top: 50%;
  width: 9px;
  height: 60px;
  transform: translateY(-50%);
  display: flex;
  align-items: center;
  justify-content: center;
  border-left: 1px solid #c0c1c3;
  border-radius: 9px 0 0 9px;
  background: #606166;
`;

const ViewPanel = styled.section`
  flex: 1;
  min-width: 0;
  display: flex;
  flex-direction: column;
`;

const VideoGrid = styled.div`
  flex: 1;
  display: grid;
  grid-template-columns: repeat(3, 1fr);
  grid-template-rows: repeat(3, 1fr);
  gap: 1px;
  background: #242527;
  border-bottom: 1px solid #242527;
`;

const Cell = styled.div`
  background: #606166;
`;

/* the selected cell is drawn over the grid lines beside it */
const MainCell = styled(Cell)`
  grid-column: span 2;
  grid-row: span 2;
  margin: 0 -1px -1px 0;
  border: 1px solid #dc3538;
`;

const Toolbar = styled.div`
  height: 40px;
  display: flex;
  align-items: center;
  border-left: 1px solid #1d2023;
  background: #2f3338;
`;

const StatusRow = styled.footer`
  height: 33px;
  display: flex;
  align-items: center;
  padding: 0 5px;
  background: #191d20;
`;

const TaskRow = styled.footer`
  height: 50px;
  display: flex;
  align-items: center;
  background: linear-gradient(90deg, #272227, #2e2124 35%, #2e2124 70%, #261f25 90%);
  color: #fff;
`;

const TaskList = styled.div`
  height: 100%;
  display: flex;
  padding-left: 3px;
`;

const underline = {
  stacked: 'linear-gradient(90deg, #76b9ed 40px, #5a8bb5 40px)',
  open: '#76b9ed',
  active: '#76b9ed',
};

const TaskButton = styled.button`
  width: 62px;
  height: 100%;
  display: grid;
  grid-template-rows: 1fr 3px;
  padding-top: 3px;
  align-items: center;
  justify-items: center;
  background: ${(props) => (props.$state === 'active' ? '#524a4c' : 'none')};

  &::after {
    content: '';
    width: ${(props) => (props.$state === 'active' ? '100%' : '51px')};
    height: 3px;
    background: ${(props) => underline[props.$state] || 'none'};
  }
`;

const Language = styled.button`
  width: 44px;
  font-size: 14px;
`;

const Clock = styled.div`
  width: 87px;
  display: flex;
  flex-direction: column;
  align-items: center;
  font-size: 14px;
  line-height: 23px;
`;

const ShowDesktop = styled.button`
  width: 6px;
  height: 100%;
  margin-left: 10px;
  border-left: 1px solid #6b6669;
`;

export default App;
